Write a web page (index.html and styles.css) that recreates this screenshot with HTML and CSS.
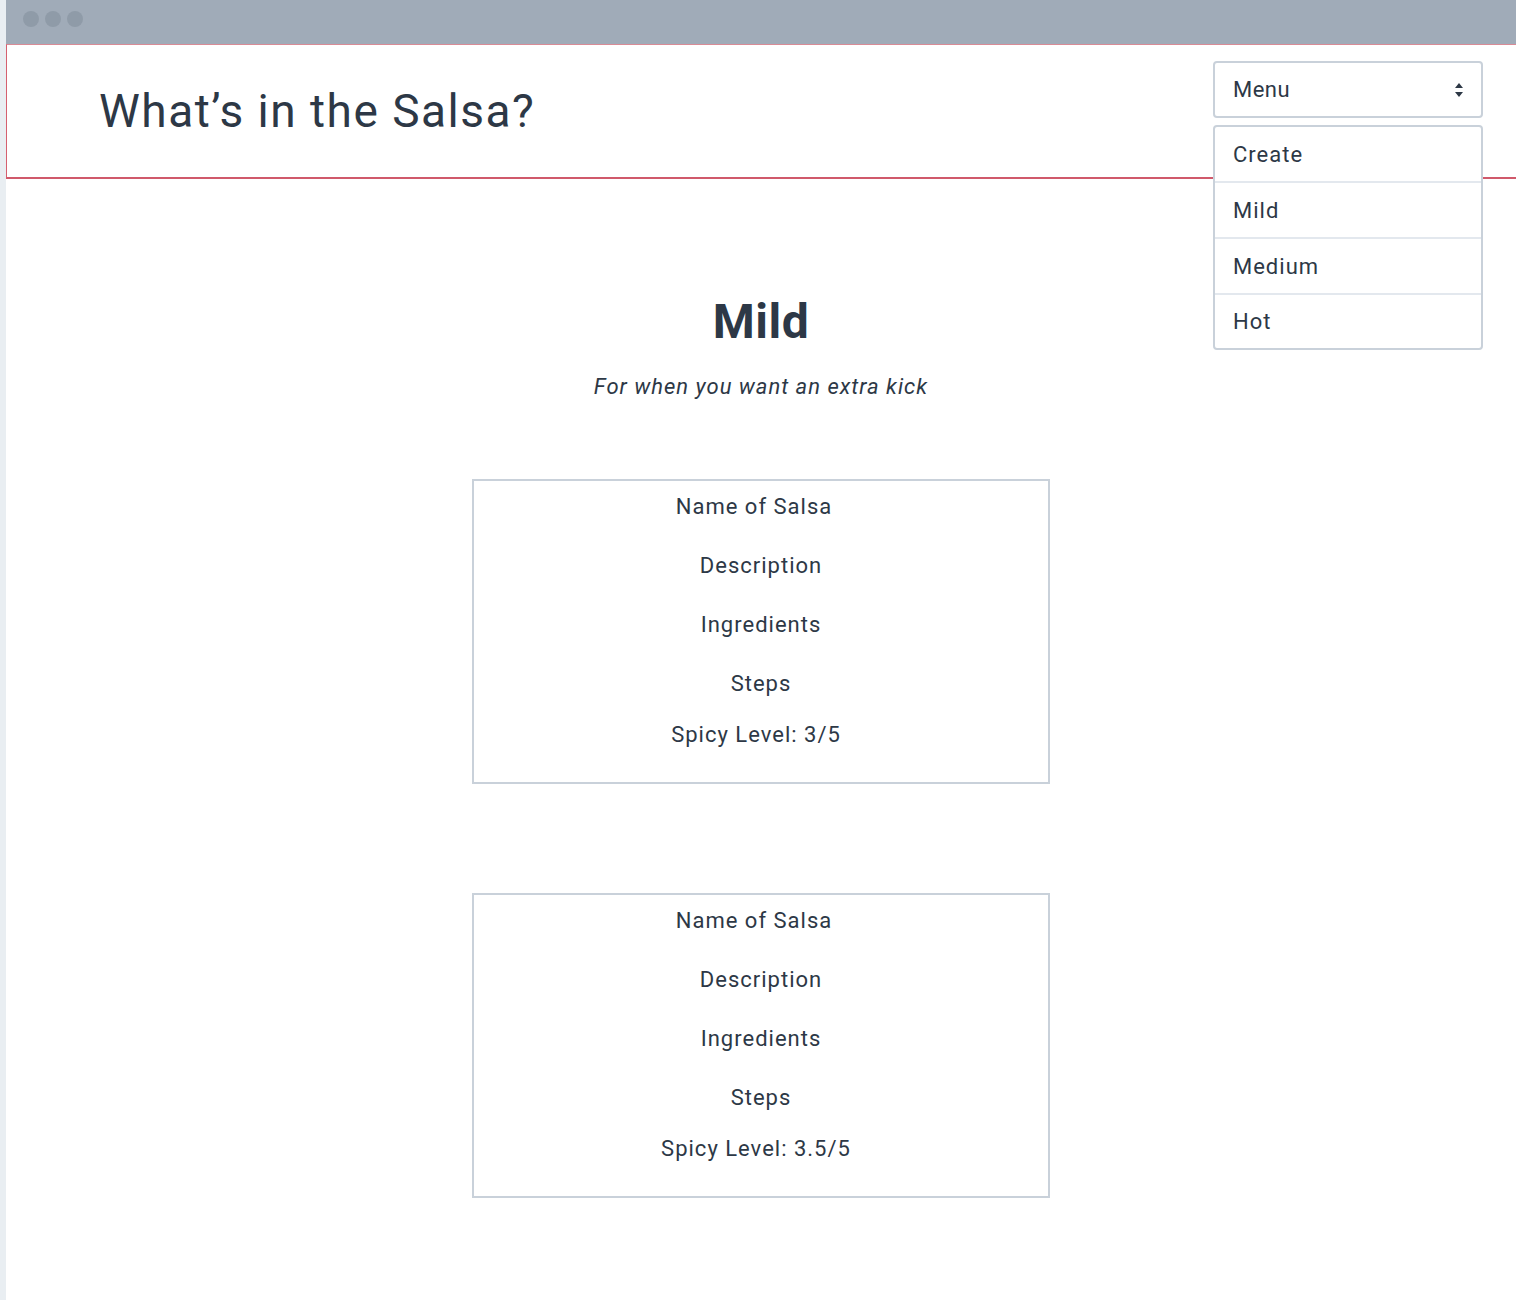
FILE: index.html
```html
<!DOCTYPE html>
<html lang="en">
<head>
<meta charset="utf-8">
<title>What’s in the Salsa?</title>
<link rel="stylesheet" href="styles.css">
</head>
<body>
<div class="window">
  <div class="titlebar">
    <span class="dot"></span><span class="dot"></span><span class="dot"></span>
  </div>
  <header class="header">
    <h1 class="site-title">What’s in the Salsa?</h1>
    <div class="menu">
      <div class="menu-select">
        <span>Menu</span>
        <svg class="menu-arrows" width="10" height="16" viewBox="0 0 10 16"><path d="M5 1 L9 6 H1 Z M5 15 L9 10 H1 Z" fill="#2d3846"/></svg>
      </div>
      <ul class="menu-list">
        <li>Create</li>
        <li>Mild</li>
        <li>Medium</li>
        <li>Hot</li>
      </ul>
    </div>
  </header>
  <main class="content">
    <h2 class="page-title">Mild</h2>
    <p class="page-sub">For when you want an extra kick</p>
    <section class="card">
      <p class="name">Name of Salsa</p>
      <p>Description</p>
      <p>Ingredients</p>
      <p>Steps</p>
      <p class="level">Spicy Level: 3/5</p>
    </section>
    <section class="card">
      <p class="name">Name of Salsa</p>
      <p>Description</p>
      <p>Ingredients</p>
      <p>Steps</p>
      <p class="level">Spicy Level: 3.5/5</p>
    </section>
  </main>
</div>
</body>
</html>
```
FILE: styles.css
```css
* { box-sizing: border-box; }
html, body { margin: 0; padding: 0; }
body {
  background: #e9eef2;
  font-family: Roboto, "Liberation Sans", sans-serif;
  color: #2d3846;
}
.window {
  margin-left: 6px;
  min-height: 1300px;
  background: #ffffff;
}
.titlebar {
  height: 44px;
  background: #a0abb8;
  display: flex;
  align-items: flex-start;
  gap: 6px;
  padding: 11px 0 0 17px;
}
.dot {
  width: 16px;
  height: 16px;
  border-radius: 50%;
  background: #8f9ba8;
}
.header {
  position: relative;
  height: 135px;
  border-top: 1px solid #d98b96;
  border-left: 1px solid #d5606f;
  border-bottom: 2px solid #d0596b;
  display: flex;
  align-items: center;
  padding-left: 92px;
}
.site-title {
  margin: 0;
  font-size: 46px;
  font-weight: 400;
  letter-spacing: 1.5px;
}
.menu {
  position: absolute;
  top: 16px;
  right: 33px;
  width: 270px;
}
.menu-select {
  height: 57px;
  border: 2px solid #c9d1da;
  border-radius: 4px;
  display: flex;
  align-items: center;
  justify-content: space-between;
  padding: 0 17px 0 18px;
  font-size: 22px;
  letter-spacing: 0.5px;
  background: #fff;
}
.menu-list {
  list-style: none;
  margin: 7px 0 0;
  padding: 0;
  border: 2px solid #c9d1da;
  border-radius: 4px;
  background: #fff;
}
.menu-list li {
  height: 56px;
  display: flex;
  align-items: center;
  padding-left: 18px;
  font-size: 22px;
  letter-spacing: 1px;
  border-top: 2px solid #e3e8ee;
}
.menu-list li:first-child { border-top: none; height: 54px; }
.menu-list li:last-child { height: 55px; }
.content {
  display: flex;
  flex-direction: column;
  align-items: center;
  padding-top: 115px;
}
.page-title {
  margin: 0;
  font-size: 48px;
  font-weight: 700;
  line-height: 56px;
  letter-spacing: 0.5px;
}
.page-sub {
  margin: 22px 0 0;
  font-size: 22px;
  font-style: italic;
  line-height: 30px;
  letter-spacing: 1px;
}
.card {
  width: 578px;
  height: 305px;
  border: 2px solid #c9d1da;
  margin-top: 77px;
  display: flex;
  flex-direction: column;
  align-items: center;
  padding-top: 11px;
}
.card + .card { margin-top: 109px; }
.card p {
  margin: 0 0 29px;
  font-size: 22px;
  line-height: 30px;
  letter-spacing: 1px;
}
.card p.name { margin-right: 14px; }
.card p.level { margin-top: -8px; margin-right: 10px; }
```
